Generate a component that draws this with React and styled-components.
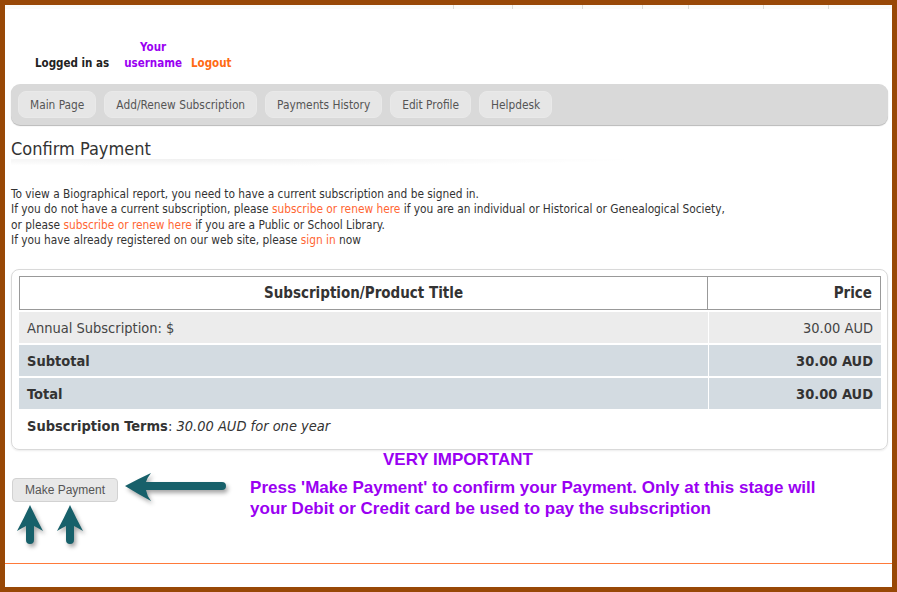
import React from "react";
import styled, { createGlobalStyle } from "styled-components";

const TAHOMA = `"DejaVu Sans Condensed", "DejaVu Sans", Verdana, sans-serif`;
const ARIAL = `"Liberation Sans", Arial, sans-serif`;

const GlobalStyle = createGlobalStyle`
    html, body {
        margin: 0;
        padding: 0;
        background: #984806;
    }
    * {
        box-sizing: border-box;
    }
`;

const navItems = ['Main Page', 'Add/Renew Subscription', 'Payments History', 'Edit Profile', 'Helpdesk'];
const tickWidths = [59, 70, 60, 46, 75, 65, 64];

function LeftArrow() {
    return (
        <ArrowSvg width="106" height="34" viewBox="0 0 106 34" $left={6} $top={-6}>
            <path
                d="M1 14 Q14 7 27 1 Q23 6 22 10 L98 10 A4 4 0 0 1 98 18 L22 18 Q23 24 27 29 Q14 22 1 14 Z"
                fill="#17606a"
            />
        </ArrowSvg>
    );
}

function UpArrow() {
    return (
        <ArrowSvg width="30" height="42" viewBox="0 0 30 42">
            <path
                d="M15 1 Q21 14 28 27 Q23 24 19 22 L19 36 A4 4 0 0 1 11 36 L11 22 Q7 24 2 27 Q9 14 15 1 Z"
                fill="#17606a"
            />
        </ArrowSvg>
    );
}

function App() {
    return (
        <>
            <GlobalStyle />
            <Frame>
                <TickRow>
                    {tickWidths.map((w, i) => (
                        <Tick key={i} style={{ width: w }} />
                    ))}
                </TickRow>

                <UserBar>
                    <span>Logged in as</span>
                    <Username>Your<br />username</Username>
                    <LogoutLink>Logout</LogoutLink>
                </UserBar>

                <NavBar>
                    {navItems.map((item) => (
                        <NavButton key={item}>{item}</NavButton>
                    ))}
                </NavBar>

                <Heading>Confirm Payment</Heading>
                <HeadingShadow />

                <Intro>
                    To view a Biographical report, you need to have a current subscription and be signed in.<br />
                    If you do not have a current subscription, please <TextLink>subscribe or renew here</TextLink> if you are an individual or Historical or Genealogical Society,<br />
                    or please <TextLink>subscribe or renew here</TextLink> if you are a Public or School Library.<br />
                    If you have already registered on our web site, please <TextLink>sign in</TextLink> now
                </Intro>

                <Panel>
                    <Table>
                        <HeadCell $align="center">Subscription/Product Title</HeadCell>
                        <HeadCell $align="right">Price</HeadCell>

                        <BodyCell $bg="#ececec">Annual Subscription: $</BodyCell>
                        <BodyCell $bg="#ececec" $align="right">30.00 AUD</BodyCell>

                        <BodyCell $bg="#d3dbe1" $bold>Subtotal</BodyCell>
                        <BodyCell $bg="#d3dbe1" $bold $align="right">30.00 AUD</BodyCell>

                        <BodyCell $bg="#d3dbe1" $bold>Total</BodyCell>
                        <BodyCell $bg="#d3dbe1" $bold $align="right">30.00 AUD</BodyCell>
                    </Table>
                    <Terms>
                        <strong>Subscription Terms</strong>: <em>30.00 AUD for one year</em>
                    </Terms>
                </Panel>

                <NoticeTitle>VERY IMPORTANT</NoticeTitle>

                <ActionRow>
                    <ButtonColumn>
                        <PayButton>Make Payment</PayButton>
                        <UpArrows>
                            <UpArrow />
                            <UpArrow />
                        </UpArrows>
                    </ButtonColumn>
                    <LeftArrow />
                    <Notice>
                        Press 'Make Payment' to confirm your Payment. Only at this stage will<br />
                        your Debit or Credit card be used to pay the subscription
                    </Notice>
                </ActionRow>

                <FooterRule />
            </Frame>
        </>
    );
}

const Frame = styled.div`
    width: 897px;
    height: 592px;
    border: 5px solid #984806;
    background: #ffffff;
    display: flex;
    flex-direction: column;
    font-family: ${TAHOMA};
    color: #333;
    overflow: hidden;
`

const TickRow = styled.div`
    display: flex;
    justify-content: flex-end;
    height: 4px;
    background: #fbfbf8;
`

const Tick = styled.div`
    border-left: 1px solid #dcdcd6;
`

const UserBar = styled.div`
    display: flex;
    align-items: flex-end;
    margin: 30px 0 0 30px;
    font-size: 11.5px;
    font-weight: bold;
    line-height: 16px;
    color: #222;
`

const Username = styled.span`
    display: inline-block;
    margin-left: 15px;
    text-align: center;
    color: #9a00f2;
`

const LogoutLink = styled.span`
    margin-left: 9px;
    color: #ff6a13;
`

const NavBar = styled.nav`
    display: flex;
    gap: 8px;
    margin: 13px 4px 0 6px;
    padding: 7px;
    height: 41px;
    background: #d9d9d9;
    border-radius: 9px;
    box-shadow: 0 1px 1px #b8b8b8;
`

const NavButton = styled.div`
    display: flex;
    align-items: center;
    height: 27px;
    padding: 0 11px;
    background: #e6e6e6;
    border: 1px solid #e9e9e9;
    border-radius: 8px;
    font-size: 11.8px;
    color: #555;
`

const Heading = styled.h1`
    margin: 12px 0 0 6px;
    font-size: 18px;
    font-weight: normal;
    line-height: 24px;
    color: #333;
`

const HeadingShadow = styled.div`
    height: 10px;
    margin: -2px 0 0 6px;
    width: 630px;
    background: radial-gradient(ellipse 100% 100% at 30% 0%, rgba(0, 0, 0, 0.06), rgba(0, 0, 0, 0) 70%);
`

const Intro = styled.p`
    margin: 18px 0 0 6px;
    font-size: 11.8px;
    line-height: 15.3px;
    color: #333;
`

const TextLink = styled.span`
    color: #ff6633;
`

const Panel = styled.div`
    margin: 21px 4px 0 6px;
    padding: 6px 6px 0 7px;
    height: 181px;
    border: 1px solid #d9d9d9;
    border-radius: 8px;
    box-shadow: 0 1px 2px rgba(0, 0, 0, 0.08);
`

const Table = styled.div`
    display: grid;
    grid-template-columns: 1fr 173px;
`

const HeadCell = styled.div`
    height: 34px;
    display: flex;
    align-items: center;
    justify-content: ${(p) => (p.$align === 'center' ? 'center' : 'flex-end')};
    padding: 0 8px;
    border: 1px solid #999;
    border-left-width: ${(p) => (p.$align === 'right' ? '0' : '1px')};
    font-size: 15px;
    font-weight: bold;
    color: #333;
`

const BodyCell = styled.div`
    height: 33px;
    display: flex;
    align-items: center;
    justify-content: ${(p) => (p.$align === 'right' ? 'flex-end' : 'flex-start')};
    padding: 0 8px;
    background: ${(p) => p.$bg};
    border-top: 2px solid #fff;
    border-left: ${(p) => (p.$align === 'right' ? '1px solid #fff' : 'none')};
    font-size: 14.5px;
    font-weight: ${(p) => (p.$bold ? 'bold' : 'normal')};
    color: ${(p) => (p.$bold ? '#333' : '#444')};
`

const Terms = styled.div`
    padding: 9px 8px 0;
    font-size: 14.5px;
    color: #333;

    strong {
        font-weight: bold;
    }
`

const NoticeTitle = styled.div`
    margin: 1px 0 0 378px;
    height: 18px;
    font-family: ${ARIAL};
    font-size: 17px;
    font-weight: bold;
    line-height: 18px;
    color: #9a00f2;
`

const ActionRow = styled.div`
    display: flex;
    align-items: flex-start;
    margin: 9px 0 0 7px;
`

const ButtonColumn = styled.div`
    display: flex;
    flex-direction: column;
`

const PayButton = styled.button`
    height: 24px;
    padding: 0 12px;
    background: #e8e8e8;
    border: 1px solid #d2d2d2;
    border-radius: 4px;
    font-family: ${ARIAL};
    font-size: 12px;
    color: #555;
`

const UpArrows = styled.div`
    display: flex;
    gap: 10px;
    margin: 2px 0 0 3px;
`

const ArrowSvg = styled.svg`
    display: block;
    flex-shrink: 0;
    margin-left: ${(p) => p.$left || 0}px;
    margin-top: ${(p) => p.$top || 0}px;
    filter: drop-shadow(2px 3px 2px rgba(0, 0, 0, 0.35));
`

const Notice = styled.div`
    margin-left: 20px;
    margin-top: -1px;
    font-family: ${ARIAL};
    font-size: 17px;
    font-weight: bold;
    line-height: 21px;
    color: #9a00f2;
`

const FooterRule = styled.div`
    margin-top: auto;
    margin-bottom: 23px;
    height: 1px;
    background: #ff7a3a;
`

export default App;
